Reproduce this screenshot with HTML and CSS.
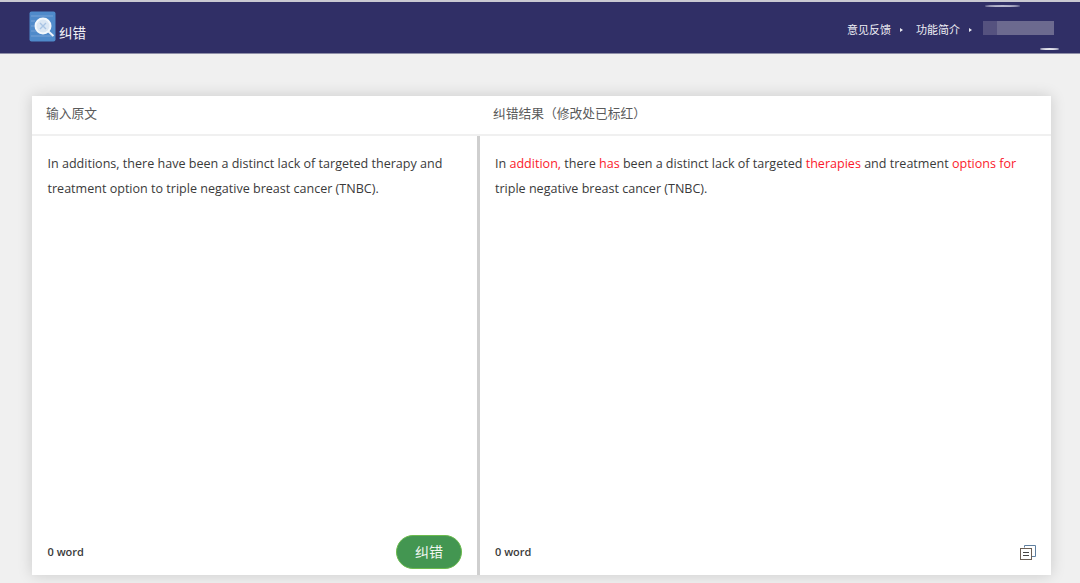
FILE: index.html
```html
<!DOCTYPE html>
<html lang="zh">
<head>
<meta charset="utf-8">
<title>纠错</title>
<link rel="stylesheet" href="styles.css">
</head>
<body>
<header class="topbar">
  <div class="brand">
    <svg class="logo" width="27" height="31" viewBox="0 0 27 31">
      <rect x="0.5" y="0.5" width="26" height="30" rx="2" fill="#4f8aca"/>
      <path d="M2 5h22M2 10h4M2 15h3M2 20h5M2 25h22" stroke="#6b9bd2" stroke-width="1.5"/>
      <circle cx="14" cy="15" r="7.5" fill="#dbe7f4" stroke="#f4f8fc" stroke-width="2"/>
      <path d="M11 12l6 6M17 12l-6 6" stroke="#a9c4e4" stroke-width="1.4"/>
      <path d="M19.5 20.5l5 4.5" stroke="#eef4fa" stroke-width="2"/>
    </svg>
    <span class="brand-name">纠错</span>
  </div>
  <nav class="nav">
    <a class="nav-item">意见反馈</a><i class="caret"></i>
    <a class="nav-item">功能简介</a><i class="caret"></i>
    <span class="user-blur"></span>
  </nav>
  <span class="streak streak-top"></span>
  <span class="streak streak-bottom"></span>
</header>
<main class="card">
  <section class="panel panel-left">
    <h2 class="panel-title">输入原文</h2>
    <div class="panel-body">
      <p class="text">In additions, there have been a distinct lack of targeted therapy and treatment option to triple negative breast cancer (TNBC).</p>
      <div class="panel-foot">
        <span class="count">0 word</span>
        <button class="btn">纠错</button>
      </div>
    </div>
  </section>
  <section class="panel panel-right">
    <h2 class="panel-title">纠错结果（修改处已标红）</h2>
    <div class="panel-body">
      <p class="text">In <em>addition,</em> there <em>has</em> been a distinct lack of targeted <em>therapies</em> and treatment <em>options for</em> triple negative breast cancer (TNBC).</p>
      <div class="panel-foot">
        <span class="count">0 word</span>
        <svg class="copy" width="16" height="15" viewBox="0 0 16 15" fill="none">
          <path d="M4.5 2.5V0.5H15.5V11.5H12" stroke="#5f7f9f" stroke-width="1"/>
          <rect x="0.5" y="3.5" width="11" height="11" stroke="#6b5f55" stroke-width="1"/>
          <path d="M3 7.5H9M3 10.5H9" stroke="#444" stroke-width="1"/>
        </svg>
      </div>
    </div>
  </section>
</main>
</body>
</html>
```
FILE: styles.css
```css
* { box-sizing: border-box; }
html, body { margin: 0; height: 100%; }
body {
  background: #f0f0f0;
  font-family: "Open Sans", "Noto Sans CJK SC", sans-serif;
  overflow: hidden;
  color: #333;
}
.topbar {
  position: relative;
  height: 54px;
  border-top: 2px solid #c9c9d2;
  border-bottom: 1px solid #8f8fa8;
  background: #302f66;
  display: flex;
  justify-content: space-between;
  padding: 9px 26px 0 29px;
}
.brand { display: flex; align-items: flex-start; }
.logo { display: block; }
.brand-name {
  margin: 13px 0 0 3px;
  font-size: 13.5px;
  line-height: 19px;
  color: #f2f2f6;
}
.nav {
  display: flex;
  align-items: center;
  height: 14px;
  margin-top: 10px;
  color: #eeeef4;
  font-size: 11px;
}
.nav-item { line-height: 14px; padding-top: 4px; }
.caret {
  width: 0;
  height: 0;
  margin: 4px 13px 0 9px;
  border-left: 3px solid #e6e6ee;
  border-top: 2.5px solid transparent;
  border-bottom: 2.5px solid transparent;
}
.nav-item + .caret + .nav-item + .caret { margin-right: 11px; }
.user-blur {
  width: 71px;
  height: 14px;
  background: linear-gradient(90deg, #55527f 0 20%, #6c6a8f 20% 100%);
}
.streak { position: absolute; height: 2px; border-radius: 50%; background: #b9b9cf; }
.streak-top { left: 985px; top: 3px; width: 35px; }
.streak-bottom { left: 1040px; top: 46px; width: 19px; background: #e4e4ec; }
.card {
  width: 1019px;
  height: 479px;
  margin: 42px 0 0 32px;
  display: flex;
  background: #fff;
  box-shadow: 0 0 14px rgba(0, 0, 0, 0.16);
}
.panel { display: flex; flex-direction: column; }
.panel-left { width: 448px; }
.panel-right { flex: 1; }
.panel-title {
  margin: 0;
  height: 40px;
  padding: 8px 0 0 14px;
  border-bottom: 2px solid #f0f0f0;
  font-size: 12.75px;
  font-weight: 400;
  line-height: 18px;
  color: #5a5a5a;
}
.panel-right .panel-title { padding-left: 13px; }
.panel-body {
  flex: 1;
  display: flex;
  flex-direction: column;
  justify-content: space-between;
  padding: 15px 15px 6px 15.5px;
}
.panel-right .panel-body { padding-left: 15px; }
.panel-left .panel-body { border-right: 3px solid #cfcfcf; }
.text {
  margin: 0;
  font-size: 12.55px;
  line-height: 25px;
  color: #3a3a3a;
}
.text em { font-style: normal; color: #fb1a2c; }
.panel-foot {
  display: flex;
  justify-content: space-between;
  align-items: center;
  height: 34px;
}
.count { font-size: 11px; font-weight: 600; color: #3a3a3a; padding-bottom: 2px; }
.btn {
  width: 66px;
  height: 34px;
  border: 1px solid #6cbb4e;
  border-radius: 17px;
  background: #439651;
  color: #f1f7f1;
  font: 14px/1 "Open Sans", "Noto Sans CJK SC", sans-serif;
}
.copy { display: block; }
```
